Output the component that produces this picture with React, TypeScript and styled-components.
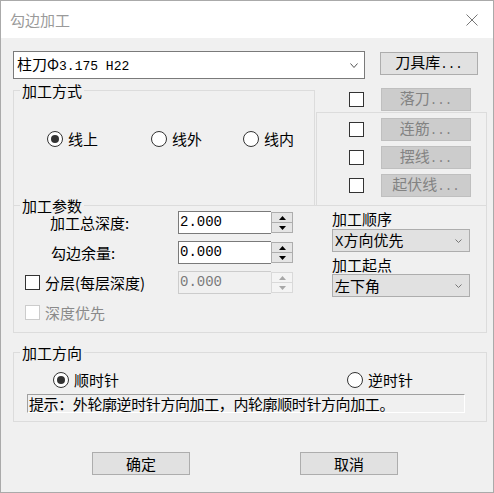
import React from "react";
import styled, { createGlobalStyle } from "styled-components";

const Global = createGlobalStyle`
  html, body { margin: 0; padding: 0; background: #ffffff; }
  body {
    font-family: "Noto Sans CJK SC", "Noto Sans", sans-serif;
    font-size: 15px;
    line-height: 17px;
    color: #000;
  }
  * { box-sizing: border-box; }
`;

const Window = styled.div`
  width: 494px;
  height: 493px;
  border: 1px solid #aaaaaa;
  background: #f0f0f0;
  display: flex;
  flex-direction: column;
`;

const TitleBar = styled.div`
  height: 37px;
  flex-shrink: 0;
  background: #ffffff;
  display: flex;
  align-items: center;
  justify-content: space-between;
  padding: 0 15px 0 9px;
`;

const TitleText = styled.span`
  color: #9a9a9a;
  font-size: 15px;
`;

const Body = styled.div`
  flex: 1;
  padding: 13px 6px 0 12px;
  display: flex;
  flex-direction: column;
`;

const Latin = styled.span<{ $size?: number }>`
  font-family: "Liberation Mono", monospace;
  font-size: ${(p) => p.$size ?? 13}px;
`;

const DotsText = styled.span`
  font-family: "Liberation Mono", monospace;
  font-size: 12.5px;
`;

const TopRow = styled.div`
  display: flex;
  align-items: flex-start;
  gap: 15px;
`;

const MainCombo = styled.div`
  width: 352px;
  height: 28px;
  background: #ffffff;
  border: 1px solid #7a7a7a;
  display: flex;
  align-items: center;
  justify-content: space-between;
  padding: 0 6px 0 3px;
`;

const PushButton = styled.div<{ $w: number; $disabled?: boolean; $top?: number }>`
  width: ${(p) => p.$w}px;
  height: 23px;
  margin-top: ${(p) => p.$top ?? 0}px;
  background: ${(p) => (p.$disabled ? "#cccccc" : "#e1e1e1")};
  border: 1px solid ${(p) => (p.$disabled ? "#bfbfbf" : "#adadad")};
  color: ${(p) => (p.$disabled ? "#838383" : "#000")};
  display: flex;
  align-items: center;
  justify-content: center;
  flex-shrink: 0;
`;

const UpperSection = styled.div`
  margin-top: 9px;
  height: 118px;
  display: grid;
  grid-template-columns: 302px 171px;
  column-gap: 1px;
`;

const GroupBox = styled.div<{ $open?: boolean }>`
  position: relative;
  border: 1px solid #dcdcdc;
  ${(p) => (p.$open ? "border-bottom: none;" : "")}
`;

const GroupTitle = styled.span`
  position: absolute;
  top: -8px;
  left: 6px;
  padding: 0 2px;
  background: #f0f0f0;
  line-height: 15px;
`;

const ModeGroup = styled(GroupBox)`
  margin-top: 2px;
  padding: 39px 0 0 33px;
`;

const RadioRow = styled.div`
  display: flex;
  align-items: center;
  height: 17px;
`;

const RadioItem = styled.label<{ $w?: number }>`
  display: flex;
  align-items: center;
  gap: 5px;
  width: ${(p) => (p.$w ? `${p.$w}px` : "auto")};
`;

const RadioCircle = styled.span<{ $checked?: boolean }>`
  width: 16px;
  height: 16px;
  border-radius: 50%;
  border: 1px solid #333333;
  background: #ffffff;
  display: flex;
  align-items: center;
  justify-content: center;
  flex-shrink: 0;
  &::after {
    content: "";
    width: 8px;
    height: 8px;
    border-radius: 50%;
    background: ${(p) => (p.$checked ? "#333333" : "transparent")};
  }
`;

const CheckBox = styled.span<{ $disabled?: boolean }>`
  width: 15px;
  height: 15px;
  border: 1px solid ${(p) => (p.$disabled ? "#cccccc" : "#333333")};
  background: #ffffff;
  flex-shrink: 0;
`;

const RightColumn = styled.div`
  display: flex;
  flex-direction: column;
`;

const ToolRow = styled.div<{ $pad?: number }>`
  height: 23px;
  display: flex;
  align-items: center;
  gap: 17px;
  padding-left: ${(p) => p.$pad ?? 0}px;
`;

const ToolBox = styled(GroupBox)`
  flex: 1;
  margin-top: 1px;
  padding: 5px 0 0 32px;
  display: flex;
  flex-direction: column;
  gap: 5px;
`;

const ParamGroup = styled(GroupBox)`
  margin-top: -1px;
  height: 128px;
  display: grid;
  grid-template-columns: 318px 138px;
`;

const ParamLeft = styled.div`
  padding-top: 5px;
  display: flex;
  flex-direction: column;
  gap: 7px;
`;

const ParamRow = styled.div<{ $pad: number }>`
  height: 23px;
  display: grid;
  grid-template-columns: 164px 115px;
  align-items: center;
  & > :first-child {
    padding-left: ${(p) => p.$pad}px;
  }
`;

const CheckLabel = styled.label<{ $disabled?: boolean }>`
  display: flex;
  align-items: center;
  gap: 5px;
  color: ${(p) => (p.$disabled ? "#8a8a8a" : "#000")};
`;

const SpinBox = styled.div`
  width: 115px;
  height: 23px;
  display: flex;
`;

const SpinField = styled.div<{ $disabled?: boolean }>`
  width: 93px;
  height: 23px;
  border: 1px solid ${(p) => (p.$disabled ? "#cccccc" : "#7a7a7a")};
  border-right: none;
  background: ${(p) => (p.$disabled ? "#f0f0f0" : "#ffffff")};
  color: ${(p) => (p.$disabled ? "#7a7a7a" : "#000")};
  display: flex;
  align-items: center;
  padding-left: 1px;
`;

const SpinButtons = styled.div`
  width: 22px;
  height: 23px;
  display: flex;
  flex-direction: column;
  padding: 1px 0;
`;

const SpinBtn = styled.div<{ $disabled?: boolean }>`
  flex: 1;
  border: 1px solid ${(p) => (p.$disabled ? "#d9d9d9" : "#adadad")};
  background: ${(p) => (p.$disabled ? "#f4f4f4" : "#e5e5e5")};
  display: flex;
  align-items: center;
  justify-content: center;
  & + & {
    border-top: none;
  }
`;

const ParamRight = styled.div`
  padding-top: 4px;
  display: flex;
  flex-direction: column;
`;

const SmallCombo = styled.div<{ $top: number }>`
  width: 138px;
  height: 23px;
  margin-top: ${(p) => p.$top}px;
  background: #e1e1e1;
  border: 1px solid #adadad;
  display: flex;
  align-items: center;
  justify-content: space-between;
  padding: 0 7px 0 2px;
`;

const SideLabel = styled.div<{ $top?: number }>`
  margin-top: ${(p) => p.$top ?? 0}px;
  height: 17px;
`;

const DirectionGroup = styled(GroupBox)`
  margin-top: 19px;
  height: 70px;
  padding: 18px 0 0 39px;
`;

const HintBox = styled.div`
  margin: 6px 0 0 -26px;
  width: 438px;
  height: 19px;
  border-top: 1px solid #a0a0a0;
  border-left: 1px solid #a0a0a0;
  border-right: 1px solid #ffffff;
  border-bottom: 1px solid #ffffff;
  padding-left: 1px;
  letter-spacing: -0.4px;
  line-height: 17px;
  white-space: nowrap;
`;

const ButtonRow = styled.div`
  margin-top: 30px;
  padding-left: 79px;
  display: flex;
  gap: 110px;
`;

const Chevron = ({ w, h, color }: { w: number; h: number; color: string }) => (
  <svg width={w} height={h} viewBox={`0 0 ${w} ${h}`}>
    <polyline points={`0.5,0.5 ${w / 2},${h - 0.5} ${w - 0.5},0.5`} fill="none" stroke={color} strokeWidth="1" />
  </svg>
);

const Arrow = ({ up, color }: { up?: boolean; color: string }) => (
  <svg width="7" height="4" viewBox="0 0 7 4">
    <polygon points={up ? "0,4 7,4 3.5,0" : "0,0 7,0 3.5,4"} fill={color} />
  </svg>
);

const CloseIcon = () => (
  <svg width="12" height="12" viewBox="0 0 12 12">
    <path d="M0.5 0.5 L11.5 11.5 M11.5 0.5 L0.5 11.5" stroke="#777" strokeWidth="1" fill="none" />
  </svg>
);

const DotLabel = ({ text }: { text: string }) => (
  <span>
    {text}
    <DotsText>...</DotsText>
  </span>
);

const Spinner = ({ value, disabled }: { value: string; disabled?: boolean }) => (
  <SpinBox>
    <SpinField $disabled={disabled}>
      <Latin $size={14}>{value}</Latin>
    </SpinField>
    <SpinButtons>
      <SpinBtn $disabled={disabled}>
        <Arrow up color={disabled ? "#a8a8a8" : "#000"} />
      </SpinBtn>
      <SpinBtn $disabled={disabled}>
        <Arrow color={disabled ? "#a8a8a8" : "#000"} />
      </SpinBtn>
    </SpinButtons>
  </SpinBox>
);

const ToolOption = ({ label }: { label: string }) => (
  <ToolRow>
    <CheckBox />
    <PushButton $w={90} $disabled>
      <DotLabel text={label} />
    </PushButton>
  </ToolRow>
);

export default function App() {
  return (
    <>
      <Global />
      <Window>
        <TitleBar>
          <TitleText>勾边加工</TitleText>
          <CloseIcon />
        </TitleBar>
        <Body>
          <TopRow>
            <MainCombo>
              <span>
                柱刀Φ<Latin>3.175 H22</Latin>
              </span>
              <Chevron w={8} h={5} color="#555" />
            </MainCombo>
            <PushButton $w={98} $top={1}>
              <DotLabel text="刀具库" />
            </PushButton>
          </TopRow>

          <UpperSection>
            <ModeGroup $open>
              <GroupTitle>加工方式</GroupTitle>
              <RadioRow>
                <RadioItem $w={104}>
                  <RadioCircle $checked />
                  线上
                </RadioItem>
                <RadioItem $w={92}>
                  <RadioCircle />
                  线外
                </RadioItem>
                <RadioItem>
                  <RadioCircle />
                  线内
                </RadioItem>
              </RadioRow>
            </ModeGroup>
            <RightColumn>
              <ToolRow $pad={33}>
                <CheckBox />
                <PushButton $w={90} $disabled>
                  <DotLabel text="落刀" />
                </PushButton>
              </ToolRow>
              <ToolBox $open>
                <ToolOption label="连筋" />
                <ToolOption label="摆线" />
                <ToolOption label="起伏线" />
              </ToolBox>
            </RightColumn>
          </UpperSection>

          <ParamGroup>
            <GroupTitle>加工参数</GroupTitle>
            <ParamLeft>
              <ParamRow $pad={36}>
                <span>加工总深度:</span>
                <Spinner value="2.000" />
              </ParamRow>
              <ParamRow $pad={37}>
                <span>勾边余量:</span>
                <Spinner value="0.000" />
              </ParamRow>
              <ParamRow $pad={11}>
                <CheckLabel>
                  <CheckBox />
                  分层(每层深度)
                </CheckLabel>
                <Spinner value="0.000" disabled />
              </ParamRow>
              <ParamRow $pad={11}>
                <CheckLabel $disabled>
                  <CheckBox $disabled />
                  深度优先
                </CheckLabel>
              </ParamRow>
            </ParamLeft>
            <ParamRight>
              <SideLabel>加工顺序</SideLabel>
              <SmallCombo $top={2}>
                <span>
                  <Latin $size={14}>X</Latin>方向优先
                </span>
                <Chevron w={7} h={4} color="#777" />
              </SmallCombo>
              <SideLabel $top={4}>加工起点</SideLabel>
              <SmallCombo $top={1}>
                <span>左下角</span>
                <Chevron w={7} h={4} color="#777" />
              </SmallCombo>
            </ParamRight>
          </ParamGroup>

          <DirectionGroup>
            <GroupTitle>加工方向</GroupTitle>
            <RadioRow>
              <RadioItem $w={294}>
                <RadioCircle $checked />
                顺时针
              </RadioItem>
              <RadioItem>
                <RadioCircle />
                逆时针
              </RadioItem>
            </RadioRow>
            <HintBox>提示：外轮廓逆时针方向加工，内轮廓顺时针方向加工。</HintBox>
          </DirectionGroup>

          <ButtonRow>
            <PushButton $w={98}>确定</PushButton>
            <PushButton $w={98}>取消</PushButton>
          </ButtonRow>
        </Body>
      </Window>
    </>
  );
}
